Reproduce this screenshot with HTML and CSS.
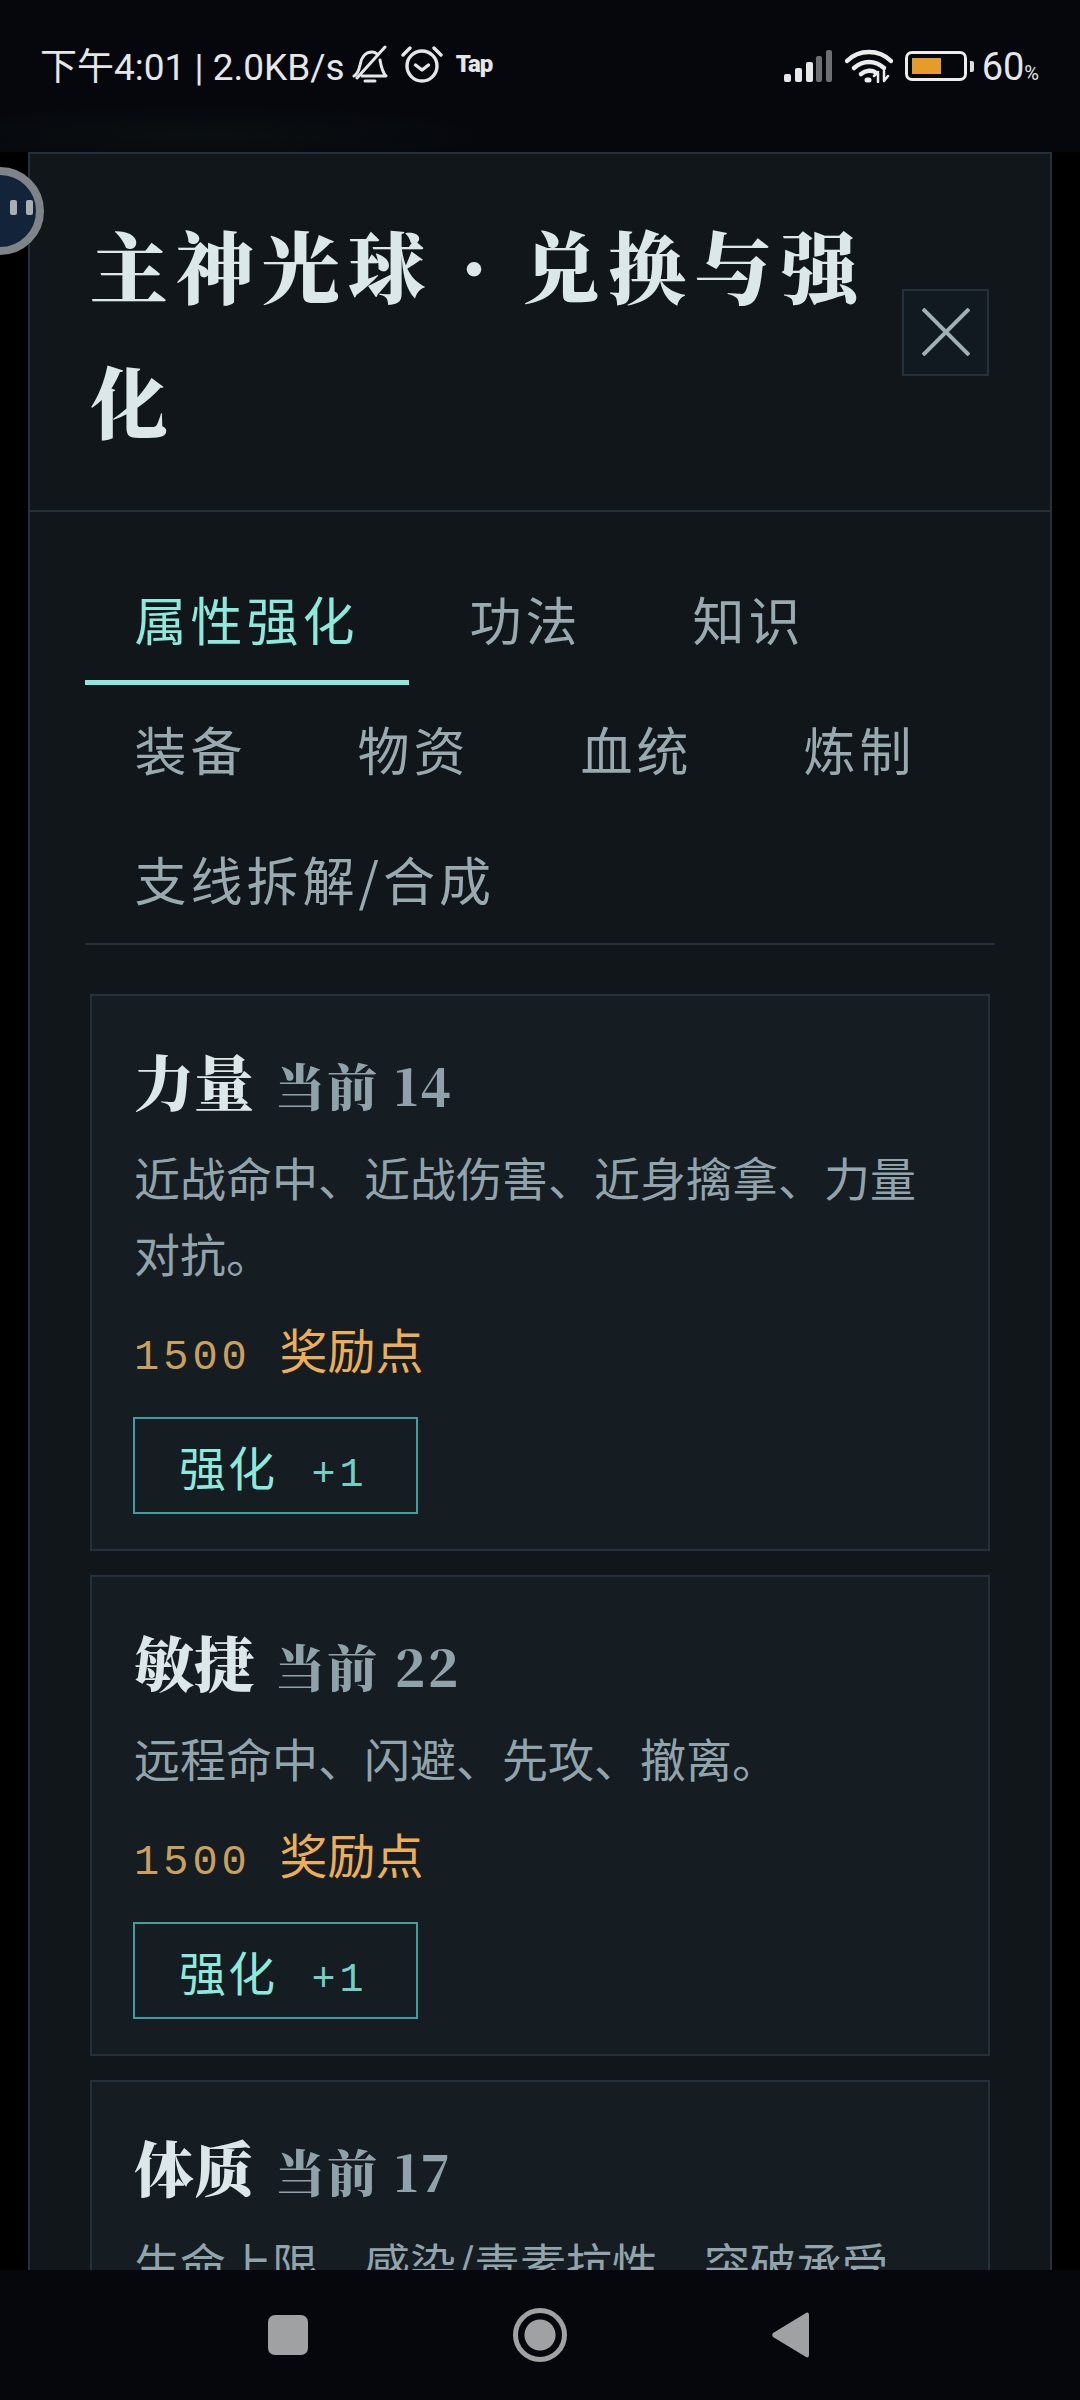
FILE: index.html
```html
<!DOCTYPE html>
<html lang="zh-CN">
<head>
  <meta charset="UTF-8">
  <meta name="viewport" content="width=device-width, initial-scale=1.0">
  <title>主神光球 · 兑换与强化</title>
  <link rel="stylesheet" href="styles.css">
</head>
<body>
  <div class="screen">

    <div class="status-bar">
      <div class="status-left">
        <span class="status-time">下午4:01 | 2.0KB/s</span>
        <svg class="icon-bell" width="36" height="38" viewBox="0 0 36 38" fill="none" stroke="#e4e6e8" stroke-width="3" stroke-linecap="round" stroke-linejoin="round">
          <path d="M2 31c4-2 5-6 6-11 1-7 5-13 12-13 2 0 4 1 5 2"/>
          <path d="M28 15c1 6 2 12 6 16H10"/>
          <path d="M5 33 33 2"/>
          <path d="M13 36h10"/>
        </svg>
        <svg class="icon-alarm" width="42" height="38" viewBox="0 0 42 38" fill="none" stroke="#e4e6e8" stroke-width="3.4" stroke-linecap="round" stroke-linejoin="round">
          <circle cx="21" cy="21" r="15"/>
          <path d="M14.500 20l6.500 5 6.500-5"/>
          <path d="M2 10 9 3"/>
          <path d="M40 10 33 3"/>
        </svg>
        <span class="status-tap">Tap</span>
      </div>
      <div class="status-right">
        <svg width="48" height="32" viewBox="0 0 48 32" fill="#e8e8e8">
          <rect x="0" y="24" width="7" height="8" rx="2"/>
          <rect x="11" y="18" width="7" height="14" rx="2"/>
          <rect x="22" y="12" width="7" height="20" rx="2"/>
          <rect x="32" y="6" width="6" height="26" rx="2" fill="#6d6f72"/>
          <rect x="42" y="0" width="6" height="32" rx="2" fill="#6d6f72"/>
        </svg>
        <svg width="48" height="34" viewBox="0 0 48 34" fill="none" stroke="#ececec" stroke-width="4.500" stroke-linecap="round">
          <path d="M2 12C14 0 34 0 46 12"/>
          <path d="M9 19C18 11 30 11 39 19"/>
          <path d="M16 25c5-4 11-4 14-2"/>
          <path d="M22 31h2" stroke-width="5"/>
          <path d="M33 33v-9M29 27l4-4M39 22v9M39 32l4-5" stroke-width="2.500"/>
        </svg>
        <div class="battery"><div class="battery-fill"></div></div>
        <div class="battery-nub"></div>
        <span class="battery-text">60<small>%</small></span>
      </div>
    </div>

    <div class="floating-ball"><i></i><i></i></div>

    <div class="panel">
      <div class="panel-head">
        <h1>主神光球 · 兑换与强化</h1>
        <button class="close-btn">
          <svg width="48" height="48" viewBox="0 0 48 48" stroke="#9fb0b7" stroke-width="4" fill="none"><path d="M1 1 47 47M47 1 1 47"/></svg>
        </button>
      </div>

      <div class="panel-body">
        <div class="tabs">
          <div class="tab active">属性强化</div>
          <div class="tab">功法</div>
          <div class="tab">知识</div>
          <div class="tab">装备</div>
          <div class="tab">物资</div>
          <div class="tab">血统</div>
          <div class="tab">炼制</div>
          <div class="tab">支线拆解/合成</div>
        </div>

        <div class="card">
          <div class="card-title">力量 <span>当前 14</span></div>
          <p class="card-desc">近战命中、近战伤害、近身擒拿、力量对抗。</p>
          <div class="cost"><span class="cost-num">1500</span> 奖励点</div>
          <button class="up-btn">强化 <span>+1</span></button>
        </div>

        <div class="card">
          <div class="card-title">敏捷 <span>当前 22</span></div>
          <p class="card-desc">远程命中、闪避、先攻、撤离。</p>
          <div class="cost"><span class="cost-num">1500</span> 奖励点</div>
          <button class="up-btn">强化 <span>+1</span></button>
        </div>

        <div class="card">
          <div class="card-title">体质 <span>当前 17</span></div>
          <p class="card-desc">生命上限、感染/毒素抗性、突破承受。</p>
          <div class="cost"><span class="cost-num">1500</span> 奖励点</div>
          <button class="up-btn">强化 <span>+1</span></button>
        </div>
      </div>
    </div>

    <div class="nav-bar">
      <div class="nav-square"></div>
      <div class="nav-home"></div>
      <svg width="38" height="46" viewBox="0 0 38 46" fill="#a0a1a3"><path d="M1 21 34 1c2-1 3 0 3 2v40c0 2-1 3-3 2L1 25c-1-1-1-3 0-4z"/></svg>
    </div>

  </div>
</body>
</html>
```

FILE: styles.css
```css
* {
  box-sizing: border-box;
}
body {
  margin: 0;
  background: #000;
  font-family: "Noto Sans CJK SC", sans-serif;
}
.screen {
  position: relative;
  width: 1080px;
  height: 2400px;
  overflow: hidden;
  display: flex;
  flex-direction: column;
  background: #000;
}

/* status bar */
.status-bar {
  flex: none;
  height: 152px;
  padding: 45px 41px 0 40px;
  display: flex;
  justify-content: space-between;
  align-items: flex-start;
  color: #e4e6e8;
  background: radial-gradient(ellipse 300px 30px at 200px 135px, #0a0f11, #05070c);
}
.status-left, .status-right {
  display: flex;
  align-items: center;
  height: 38px;
}
.status-time {
  font-family: Roboto, "Noto Sans CJK SC", sans-serif;
  font-size: 37px;
  white-space: nowrap;
}
.icon-bell {
  margin-left: 7px;
}
.icon-alarm {
  margin-left: 13px;
}
.status-tap {
  margin-left: 13px;
  font-family: Roboto, sans-serif;
  font-size: 24px;
  font-weight: 900;
  letter-spacing: -1px;
}
.status-right {
  margin-top: 2px;
}
.status-right svg + svg {
  margin-left: 13px;
}
.battery {
  margin-left: 12px;
  width: 62px;
  height: 30px;
  border: 3px solid #ececec;
  border-radius: 7px;
  padding: 4px;
}
.battery-fill {
  width: 29px;
  height: 100%;
  background: #e59c2a;
}
.battery-nub {
  width: 4px;
  height: 11px;
  margin-left: 3px;
  background: #dcdcdc;
  border-radius: 0 2px 2px 0;
}
.battery-text {
  margin-left: 8px;
  padding-top: 1px;
  font-family: Roboto, sans-serif;
  font-size: 38px;
  white-space: nowrap;
}
.battery-text small {
  font-size: 20px;
}

/* floating ball at the screen edge */
.floating-ball {
  position: absolute;
  left: -44px;
  top: 167px;
  width: 88px;
  height: 88px;
  border-radius: 50%;
  border: 8px solid #7e8487;
  background: #13233a;
  z-index: 3;
}
.floating-ball i {
  position: absolute;
  top: 25px;
  width: 7px;
  height: 15px;
  border-radius: 2px;
  background: #a9aeb1;
}
.floating-ball i:first-child {
  left: 46px;
}
.floating-ball i:last-child {
  left: 62px;
}

/* panel */
.panel {
  flex: 1;
  min-height: 0;
  margin: 0 28px;
  overflow: hidden;
  background: #10161a;
  border: 2px solid #25313a;
  border-bottom: 0;
}
.panel-head {
  height: 358px;
  padding: 0 61px 0 60px;
  display: flex;
  align-items: center;
  justify-content: space-between;
  border-bottom: 2px solid #25313a;
}
h1 {
  margin: 0;
  width: 790px;
  font-family: "Noto Serif CJK SC", "Liberation Serif", "Noto Sans CJK SC", serif;
  font-size: 78px;
  font-weight: 900;
  line-height: 135px;
  letter-spacing: 7.900px;
  color: #dce7ea;
}
.close-btn {
  width: 87px;
  height: 87px;
  padding: 0;
  display: flex;
  align-items: center;
  justify-content: center;
  background: #111a20;
  border: 2px solid #25313a;
}

.panel-body {
  padding: 54px 55px 0;
}
.tabs {
  display: flex;
  flex-wrap: wrap;
  gap: 13px 11px;
  border-bottom: 2px solid #25313a;
}
.tab {
  height: 119px;
  padding: 25px 50.500px 0 49.500px;
  border-bottom: 5px solid transparent;
  margin-bottom: -2px;
  font-size: 52px;
  line-height: 56px;
  letter-spacing: 4px;
  color: #98a9b0;
}
.tab.active {
  color: #8ce9dc;
  border-bottom-color: #8ce9dc;
}

.card {
  margin: 49px 5px 0;
  padding: 50px 42px 35px;
  background: #151c22;
  border: 2px solid #25313a;
}
.card + .card {
  margin-top: 24px;
}
.card-title {
  font-family: "Noto Serif CJK SC", "Liberation Serif", "Noto Sans CJK SC", serif;
  font-size: 60px;
  font-weight: 900;
  line-height: 68px;
  color: #dce7ea;
}
.card-title span {
  margin-left: 6px;
  font-size: 50px;
  font-weight: 900;
  letter-spacing: 2.500px;
  color: #8fa1a9;
}
.card-desc {
  margin: 20px 0 0;
  font-size: 46px;
  line-height: 76px;
  color: #92a4ab;
}
.cost {
  margin-top: 19px;
  height: 78px;
  font-size: 48px;
  line-height: 78px;
  color: #ecae56;
}
.cost-num {
  margin-right: 18px;
  font-family: "Liberation Mono", monospace;
  font-size: 42px;
  letter-spacing: 4px;
  color: #c9a05e;
}
.up-btn {
  display: block;
  margin: 30px 0 0 -1px;
  width: 285px;
  height: 97px;
  padding: 0 0 0 44px;
  text-align: left;
  background: none;
  border: 2px solid #3f9f9f;
  font-family: "Noto Sans CJK SC", sans-serif;
  font-size: 47px;
  letter-spacing: 2px;
  color: #8ce9dc;
}
.up-btn span {
  margin-left: 22px;
  font-family: "Liberation Mono", monospace;
  font-size: 40px;
  letter-spacing: 4px;
  color: #74cfc5;
}

/* navigation bar */
.nav-bar {
  flex: none;
  height: 130px;
  padding: 0 270px 0 268px;
  display: flex;
  align-items: center;
  justify-content: space-between;
  background: #05070c;
}
.nav-square {
  width: 40px;
  height: 40px;
  border-radius: 7px;
  background: #a0a1a3;
}
.nav-home {
  width: 54px;
  height: 54px;
  border-radius: 50%;
  border: 5px solid #a0a1a3;
  background: radial-gradient(circle, #a0a1a3 0 15px, #05070c 16px);
}
```
